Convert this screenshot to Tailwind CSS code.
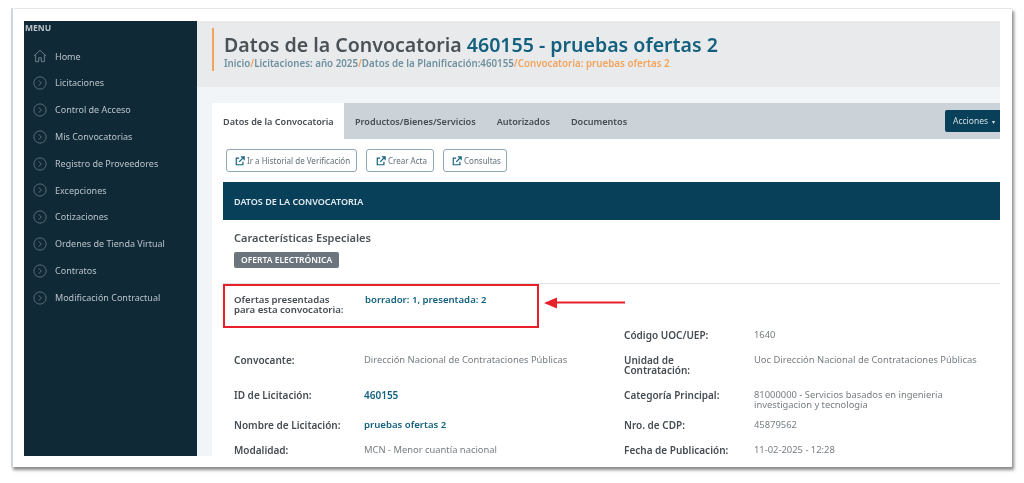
<!DOCTYPE html>
<html lang="es">
<head>
  <meta charset="UTF-8">
  <title>Datos de la Convocatoria</title>
  <script src="https://cdn.jsdelivr.net/npm/@tailwindcss/browser@4"></script>
</head>
<body class="bg-white overflow-hidden font-['Noto_Sans','Open_Sans',sans-serif]">
  <div class="w-[1024px] h-[483px] overflow-hidden pt-[8px] pl-[11px]">
    <!-- marco de la captura -->
    <div class="w-[1001px] h-[459px] bg-white pt-[12px] pl-[11px] pr-[12px] pb-[11px] border-t border-t-gray-200 border-l-2 border-l-gray-300 shadow-[2px_3px_3px_#8a8a8a] blur-[0.5px]">
      <div class="flex w-[976px] h-[435px] overflow-hidden">

        <!-- Menu -->
        <aside class="w-[173px] shrink-0 bg-[#102937] text-[#b9c3c9]">
          <div class="text-[8.5px] leading-[10px] font-bold pl-[1px] pt-[2px]">MENU</div>
          <ul class="mt-[10px] text-[9px]">
            <li class="flex items-center h-[26.8px] pl-[9px] gap-[8px]">
              <svg class="w-[14px] h-[14px]" viewBox="0 0 16 16" fill="none" stroke="#7a8a93" stroke-width="1"><path d="M1 8 8 1.5 15 8M3 7v7.5h3.5V10h3v4.5H13V7"/></svg>
              <span>Home</span>
            </li>
            <li class="flex items-center h-[26.8px] pl-[9px] gap-[8px]"><svg class="w-[14px] h-[14px]" viewBox="0 0 16 16" fill="none" stroke="#66767f"><circle cx="8" cy="8" r="7"/><path d="m6.5 5 3 3-3 3"/></svg><span>Licitaciones</span></li>
            <li class="flex items-center h-[26.8px] pl-[9px] gap-[8px]"><svg class="w-[14px] h-[14px]" viewBox="0 0 16 16" fill="none" stroke="#66767f"><circle cx="8" cy="8" r="7"/><path d="m6.5 5 3 3-3 3"/></svg><span>Control de Acceso</span></li>
            <li class="flex items-center h-[26.8px] pl-[9px] gap-[8px]"><svg class="w-[14px] h-[14px]" viewBox="0 0 16 16" fill="none" stroke="#66767f"><circle cx="8" cy="8" r="7"/><path d="m6.5 5 3 3-3 3"/></svg><span>Mis Convocatorias</span></li>
            <li class="flex items-center h-[26.8px] pl-[9px] gap-[8px]"><svg class="w-[14px] h-[14px]" viewBox="0 0 16 16" fill="none" stroke="#66767f"><circle cx="8" cy="8" r="7"/><path d="m6.5 5 3 3-3 3"/></svg><span>Registro de Proveedores</span></li>
            <li class="flex items-center h-[26.8px] pl-[9px] gap-[8px]"><svg class="w-[14px] h-[14px]" viewBox="0 0 16 16" fill="none" stroke="#66767f"><circle cx="8" cy="8" r="7"/><path d="m6.5 5 3 3-3 3"/></svg><span>Excepciones</span></li>
            <li class="flex items-center h-[26.8px] pl-[9px] gap-[8px]"><svg class="w-[14px] h-[14px]" viewBox="0 0 16 16" fill="none" stroke="#66767f"><circle cx="8" cy="8" r="7"/><path d="m6.5 5 3 3-3 3"/></svg><span>Cotizaciones</span></li>
            <li class="flex items-center h-[26.8px] pl-[9px] gap-[8px]"><svg class="w-[14px] h-[14px]" viewBox="0 0 16 16" fill="none" stroke="#66767f"><circle cx="8" cy="8" r="7"/><path d="m6.5 5 3 3-3 3"/></svg><span>Ordenes de Tienda Virtual</span></li>
            <li class="flex items-center h-[26.8px] pl-[9px] gap-[8px]"><svg class="w-[14px] h-[14px]" viewBox="0 0 16 16" fill="none" stroke="#66767f"><circle cx="8" cy="8" r="7"/><path d="m6.5 5 3 3-3 3"/></svg><span>Contratos</span></li>
            <li class="flex items-center h-[26.8px] pl-[9px] gap-[8px]"><svg class="w-[14px] h-[14px]" viewBox="0 0 16 16" fill="none" stroke="#66767f"><circle cx="8" cy="8" r="7"/><path d="m6.5 5 3 3-3 3"/></svg><span>Modificación Contractual</span></li>
          </ul>
        </aside>

        <main class="flex-1 min-w-0 bg-[#f2f5f7]">
          <!-- Cabecera -->
          <header class="h-[66px] bg-[#e9eaec] pt-[7px] pl-[15px]">
            <div class="border-l-[2px] border-l-[#f2a45c] h-[43px] pl-[10px] pt-[3px]">
              <h1 class="text-[19.56px] leading-[27px] font-semibold text-[#4a5157] whitespace-nowrap">Datos de la Convocatoria <span class="text-[#13617f]">460155 - pruebas ofertas 2</span></h1>
              <p class="text-[9.75px] leading-[12px] font-semibold text-[#6f919f] whitespace-nowrap">Inicio<span class="text-[#f2a45c]">/</span>Licitaciones: año 2025<span class="text-[#f2a45c]">/</span>Datos de la Planificación:460155<span class="text-[#f2a45c]">/Convocatoria: pruebas ofertas 2</span></p>
            </div>
          </header>

          <section class="relative mt-[16px] ml-[15px] bg-white h-[353px]">
            <!-- Pestañas -->
            <nav class="flex items-center h-[36px] bg-[#cbd3d9] text-[9.1px] font-semibold text-[#454c52]">
              <div class="w-[132px] h-full bg-white flex items-center pl-[11px] pt-[1px]">Datos de la Convocatoria</div>
              <div class="pl-[11px] pt-[1px]">Productos/Bienes/Servicios</div>
              <div class="pl-[21px] pt-[1px]">Autorizados</div>
              <div class="pl-[21px] pt-[1px]">Documentos</div>
              <button class="ml-auto w-[55px] h-[22px] bg-[#08405a] rounded-l-[2px] text-[8.5px] font-normal text-[#d5dfe4] text-left pl-[8px]">Acciones <span class="text-[6px] ml-[2px]">▾</span></button>
            </nav>

            <!-- Acciones -->
            <div class="flex gap-[9px] pl-[14px] pt-[10px] text-[8px] text-[#5f6f78]">
              <a class="flex items-center gap-[2px] h-[23px] w-[131px] pl-[8px] border border-[#8fa8b5] rounded-[3px]"><svg class="w-[10px] h-[10px]" viewBox="0 0 12 12" fill="none" stroke="#13617f" stroke-width="1.4"><path d="M5 2.5H1.5v8h8V7M5 7l5.5-5.5M7 1h4v4"/></svg>Ir a Historial de Verificación</a>
              <a class="flex items-center gap-[2px] h-[23px] w-[68px] pl-[9px] border border-[#8fa8b5] rounded-[3px]"><svg class="w-[10px] h-[10px]" viewBox="0 0 12 12" fill="none" stroke="#13617f" stroke-width="1.4"><path d="M5 2.5H1.5v8h8V7M5 7l5.5-5.5M7 1h4v4"/></svg>Crear Acta</a>
              <a class="flex items-center gap-[2px] h-[23px] w-[64px] pl-[8px] border border-[#8fa8b5] rounded-[3px]"><svg class="w-[10px] h-[10px]" viewBox="0 0 12 12" fill="none" stroke="#13617f" stroke-width="1.4"><path d="M5 2.5H1.5v8h8V7M5 7l5.5-5.5M7 1h4v4"/></svg>Consultas</a>
            </div>

            <div class="ml-[11px] mt-[10px]">
              <div class="h-[38px] bg-[#08405a] flex items-center pl-[11px] pt-[1px] text-[9px] font-semibold text-[#e4ebee]">DATOS DE LA CONVOCATORIA</div>

              <div class="pl-[11px] pt-[11px] h-[64px] border-b border-b-[#dfe2e4]">
                <h2 class="text-[11px] leading-[14px] font-semibold text-[#4d5459]">Características Especiales</h2>
                <span class="inline-block mt-[2px] h-[16px] px-[7px] bg-[#6c757d] rounded-[2px] text-[8.5px] leading-[16px] font-semibold text-white">OFERTA ELECTRÓNICA</span>
              </div>

              <!-- Ofertas presentadas -->
              <div class="flex pl-[11px] pt-[11px] h-[46px] text-[9.6px] leading-[10px]">
                <div class="w-[131px] font-semibold text-[#454c52]">Ofertas presentadas<br>para esta convocatoria:</div>
                <div class="font-semibold text-[#13617f]">borrador: 1, presentada: 2</div>
              </div>

              <!-- Datos -->
              <div class="grid grid-cols-[130px_260px_130px_1fr] pl-[11px] text-[9.4px] leading-[10px] text-[#777d82] [&>b]:text-[10px] [&>b]:font-semibold [&>b]:text-[#454c52]">
                <div class="col-span-2 h-[25px]"></div><b>Código UOC/UEP:</b><div>1640</div>
                <b class="h-[35px]">Convocante:</b><div>Dirección Nacional de Contrataciones Públicas</div><b class="pr-[30px]">Unidad de Contratación:</b><div>Uoc Dirección Nacional de Contrataciones Públicas</div>
                <b class="h-[30px]">ID de Licitación:</b><div class="text-[10px] font-semibold text-[#13617f]">460155</div><b>Categoría Principal:</b><div>81000000 - Servicios basados en ingenieria investigacion y tecnologia</div>
                <b class="h-[25px]">Nombre de Licitación:</b><div class="text-[9.6px] font-semibold text-[#13617f]">pruebas ofertas 2</div><b>Nro. de CDP:</b><div>45879562</div>
                <b class="h-[25px]">Modalidad:</b><div>MCN - Menor cuantía nacional</div><b>Fecha de Publicación:</b><div>11-02-2025 - 12:28</div>
              </div>
            </div>

            <!-- Anotación en rojo -->
            <div class="absolute left-[11px] top-[181px] w-[316px] h-[44px] border-[2px] border-[#e8202a]"></div>
            <svg class="absolute left-[331px] top-[192px] w-[83px] h-[16px]" viewBox="0 0 83 16"><path d="M82 7.5H10" stroke="#e8202a" stroke-width="2"/><path d="M1 8 14 2.5v11z" fill="#e8202a"/></svg>
          </section>
        </main>
      </div>
    </div>
  </div>
</body>
</html>
